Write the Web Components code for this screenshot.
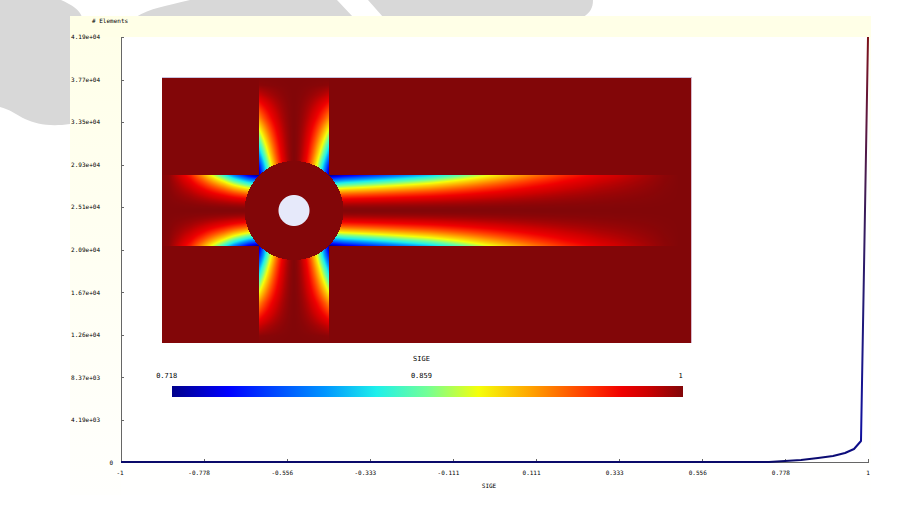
<!DOCTYPE html>
<html lang="en">
<head>
<meta charset="utf-8">
<title>SIGE element distribution</title>
<style>
body { margin: 0; background: #fff; font-family: "DejaVu Sans Mono", monospace; color: #000; }
</style>
</head>
<body>
<sige-report>
  <page-backdrop slot="backdrop"></page-backdrop>
  <histogram-plot heading="# Elements" caption="SIGE"
    ylabels="4.19e+04 3.77e+04 3.35e+04 2.93e+04 2.51e+04 2.09e+04 1.67e+04 1.26e+04 8.37e+03 4.19e+03 0"
    xlabels="-1 -0.778 -0.556 -0.333 -0.111 0.111 0.333 0.556 0.778 1">
    <field-map></field-map>
    <colour-scale name="SIGE" low="0.718" mid="0.859" high="1"></colour-scale>
  </histogram-plot>
</sige-report>
<script>
const define = (name, html, setup) => {
  const t = document.createElement('template');
  t.innerHTML = html;
  customElements.define(name, class extends HTMLElement {
    constructor() {
      super();
      this.attachShadow({ mode: 'open' }).append(t.content.cloneNode(true));
    }
    connectedCallback() { if (setup) setup(this, this.shadowRoot); }
  });
};

// Colour map shared by the field and its scale
const stops = [[0,0,0,139],[.11,0,0,255],[.3,0,150,255],[.4,30,240,235],[.5,115,255,150],[.6,245,255,10],[.7,255,165,0],[.82,255,50,0],[.88,240,0,0],[.93,205,0,0],[1,130,6,8]];
const colourAt = t => {
  t = Math.min(1, Math.max(0, t));
  let i = 1;
  while (stops[i][0] < t) i++;
  const a = stops[i - 1], b = stops[i], k = (t - a[0]) / (b[0] - a[0]);
  return [1, 2, 3].map(c => a[c] + (b[c] - a[c]) * k);
};

define('sige-report', `
<style>
:host { display: flex; flex-direction: column; position: relative; min-height: 100vh; box-sizing: border-box; padding: 16px 29px 11px 70px; }
main { display: flex; flex: 1; position: relative; }
::slotted(histogram-plot) { flex: 1; }
</style>
<slot name="backdrop"></slot><main><slot></slot></main>`);

define('page-backdrop', `
<style>
:host { position: absolute; inset: 0; overflow: hidden; }
svg { display: block; width: 100%; height: 100%; }
</style>
<svg viewBox="0 0 900 506" preserveAspectRatio="none" fill="#d8d8d8" aria-hidden="true">
<path d="M0 0H61C72 5 79 9 82 17C100 50 100 118 70 124C50 127 36 124 25 119C17 115 9 109 0 107Z"/>
<path d="M190 0H337L353 17H136C150 8 166 6 190 0Z"/>
<path d="M368 0H593C593 8 590 13 583 17H383Z"/>
</svg>`);

define('histogram-plot', `
<style>
:host { display: grid; grid-template: 21px 1fr 32px / 51px 1fr; background: #fffffe; font-size: 6px; line-height: 8px; }
header { grid-column: 1 / 3; background: #ffffe7; padding: 1px 22px; }
.y { grid-area: 2 / 1; display: flex; flex-direction: column; justify-content: space-between; align-items: flex-end; margin: -4px 0; padding-right: 21px; z-index: 1; }
.y span:last-child { margin-right: -13px; }
.left { grid-area: 2 / 1 / 4 / 2; background: linear-gradient(#ffffe9, #fffff3 50%, #fffffd); }
.plot { grid-area: 2 / 2; margin-right: 2px; background: #fff; position: relative; }
.plot > svg { position: absolute; inset: 0; width: 100%; height: 100%; overflow: visible; }
.edge { grid-area: 2 / 2; justify-self: end; width: 2px; background: linear-gradient(#fffff0, #fffffc); }
.inner { position: relative; padding: 41px 23.7% 0 5.5%; box-sizing: border-box; }
footer { grid-area: 3 / 2; margin: 6px -12px 0 -16px; }
.x { display: flex; justify-content: space-between; }
.x span { width: 30px; box-sizing: border-box; text-align: center; padding-right: 8px; }
.x span:first-child, .x span:last-child { padding-right: 0; }
.cap { text-align: center; margin-top: 5px; padding-right: 10px; }
path { vector-effect: non-scaling-stroke; fill: none; }
</style>
<header></header>
<div class="left"></div>
<div class="y"></div>
<div class="plot">
<svg viewBox="0 0 748 426" preserveAspectRatio="none" aria-hidden="true">
<defs><linearGradient id="g" gradientUnits="userSpaceOnUse" x1="0" y1="0" x2="0" y2="426">
<stop offset="0" stop-color="#7c1018"/><stop offset=".15" stop-color="#641638"/><stop offset=".4" stop-color="#3c1c58"/><stop offset=".65" stop-color="#201a78"/><stop offset=".93" stop-color="#1010a0"/><stop offset="1" stop-color="#0a0a68"/></linearGradient></defs>
<path class="axis" stroke="#666" shape-rendering="crispEdges"/>
<path d="M0 425H648L680 423L697 421L712 419L724 416L733 412L740 404L747 0" stroke="url(#g)" stroke-width="2" stroke-linejoin="round"/>
</svg>
<div class="inner"><slot></slot></div>
</div>
<div class="edge"></div>
<footer><div class="x"></div><div class="cap"></div></footer>`, (el, root) => {
  const fill = (sel, attr) => root.querySelector(sel).replaceChildren(...el.getAttribute(attr).split(' ').map(s => {
    const n = document.createElement('span');
    n.textContent = s;
    return n;
  }));
  root.querySelector('header').textContent = el.getAttribute('heading');
  root.querySelector('.cap').textContent = el.getAttribute('caption');
  fill('.y', 'ylabels');
  fill('.x', 'xlabels');
  let d = 'M0 0V425H748';
  for (let i = 0; i < 10; i++) d += `M0 ${Math.round(i * 42.5)}h3M${Math.round(i * 83)} 425v-3`;
  root.querySelector('.axis').setAttribute('d', d);
});

define('field-map', `
<style>
:host { display: block; border-top: 1px solid #c9c4e0; border-right: 1px solid #d8b8cc; margin-top: -1px; }
canvas { display: block; width: 100%; height: auto; }
</style>
<canvas width="529" height="265" role="img" aria-label="SIGE field around a circular inclusion"></canvas>`, (el, root) => {
  const ctx = root.querySelector('canvas').getContext('2d');
  const W = 529, H = 265, img = ctx.createImageData(W, H);
  const cx = 132, cy = 132.5, half = 35.2;
  // Drop along an arm's edge, by distance from the corner
  const right = [[0,1],[15,.92],[45,.82],[75,.72],[100,.64],[130,.52],[155,.42],[180,.33],[205,.25],[235,.17],[270,.1],[305,.05],[335,.01],[350,0]];
  const left = [[0,1],[10,.92],[25,.72],[35,.56],[45,.43],[56,.29],[68,.16],[80,.07],[90,.01],[97,0]];
  const up = [[0,1],[10,.88],[22,.7],[34,.55],[46,.41],[57,.28],[70,.16],[80,.07],[90,.01],[97,0]];
  const drop = (table, s) => {
    let i = 1;
    while (i < table.length - 1 && table[i][0] < s) i++;
    const [a, b] = [table[i - 1], table[i]];
    return Math.max(0, a[1] + (b[1] - a[1]) * (s - a[0]) / (b[0] - a[0]));
  };
  for (let y = 0; y < H; y++) for (let x = 0; x < W; x++) {
    const dx = x + .5 - cx, dy = y + .5 - cy, ax = Math.abs(dx), ay = Math.abs(dy);
    let v = 1;
    if (Math.hypot(dx, dy) > 49.5) {
      if (ay < half) v = 1 - drop(dx > 0 ? right : left, Math.max(0, ax - half)) * (ay / half) ** 1.8;
      else if (ax < half) v = 1 - drop(up, Math.max(0, ay - half)) * (ax / half) ** 1.8;
    }
    let c = colourAt(v);
    const k = Math.min(1, Math.max(0, 16 - Math.hypot(dx, dy)));
    c = c.map((n, i) => n + ([230, 233, 250][i] - n) * k);
    img.data.set([...c, 255], (y * W + x) * 4);
  }
  ctx.putImageData(img, 0, 0);
});

define('colour-scale', `
<style>
:host { display: block; font-size: 7px; line-height: 9px; padding: 12px 9px 0 0; }
.name { text-align: center; margin-right: 2px; }
.values { display: grid; grid-template-columns: 1fr 1fr 1fr; margin: 8px 0 5px -6px; }
.values span:nth-child(2) { text-align: center; padding-left: 4px; }
.values span:nth-child(3) { text-align: right; }
.bar { height: 11px; margin-left: 10px; }
</style>
<div class="name"></div>
<div class="values"><span></span><span></span><span></span></div>
<div class="bar"></div>`, (el, root) => {
  root.querySelector('.name').textContent = el.getAttribute('name');
  root.querySelectorAll('span').forEach((s, i) => s.textContent = el.getAttribute(['low', 'mid', 'high'][i]));
  root.querySelector('.bar').style.background = 'linear-gradient(90deg,' + stops.map(([t, ...c]) => `rgb(${c}) ${t * 100}%`) + ')';
});
</script>
</body>
</html>
